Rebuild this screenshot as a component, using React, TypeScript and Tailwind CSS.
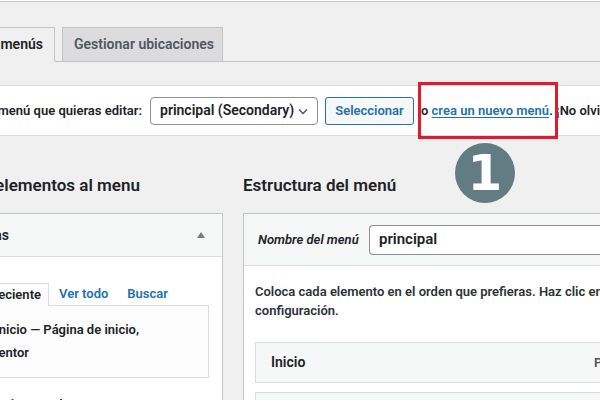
import type { ReactNode } from "react";

// Text that is cut off by the left edge of the screenshot: right-aligned in a fixed box
function Cut({ className, children }: { className: string; children: ReactNode }) {
  return (
    <span className={`flex shrink-0 justify-end overflow-hidden whitespace-nowrap ${className}`}>
      <span>{children}</span>
    </span>
  );
}

export default function App() {
  return (
    <div className="relative h-[400px] w-[600px] overflow-hidden bg-[#f0f0f1] font-['Roboto',sans-serif] text-[#1d2327]">
      {/* Top edge */}
      <div className="h-px bg-white" />
      <div className="h-px bg-[#c3c4c7]" />

      {/* Tabs */}
      <div className="mt-[25px] flex h-[35px] items-end border-b border-[#c3c4c7]">
        <div className="-mb-px flex h-[35px] w-[55px] shrink-0 items-center border-t border-r border-b border-[#c3c4c7] border-b-[#f0f0f1] bg-[#f0f0f1] text-[14px] font-semibold">
          <Cut className="w-[43px]">Editar menús</Cut>
        </div>
        <div className="-mb-px ml-[7px] flex h-[35px] w-[161px] shrink-0 items-center border border-[#c3c4c7] bg-[#dcdcde] px-[11px] text-[14px] font-semibold whitespace-nowrap text-[#50575e]">
          Gestionar ubicaciones
        </div>
      </div>

      {/* Menu select bar */}
      <div className="relative mt-[23px] flex h-[51px] items-center border-y border-[#dcdcde] bg-white text-[13px] font-semibold">
        <Cut className="w-[142px]">Selecciona el menú que quieras editar:</Cut>
        <div className="ml-[8px] flex h-[28px] w-[168px] shrink-0 items-center justify-between rounded-[4px] border border-[#8c8f94] bg-white pr-[8px] pl-[9px] text-[14px] font-semibold whitespace-nowrap">
          <span>principal (Secondary)</span>
          <svg width="12" height="12" viewBox="0 0 12 12" fill="none" stroke="#50575e" strokeWidth="1.4">
            <path d="M2 4.5l4 4 4-4" />
          </svg>
        </div>
        <div className="ml-[7px] flex h-[28px] w-[89px] shrink-0 items-center justify-center rounded-[3px] border border-[#2271b1] bg-[#f6f7f7] text-[13px] font-semibold whitespace-nowrap text-[#2271b1]">
          Seleccionar
        </div>
        <span className="ml-[7px] shrink-0 whitespace-nowrap">
          o{" "}
          <span className="text-[#2271b1] underline underline-offset-2">crea un nuevo menú</span>. ¡No olvides guardar los cambios!
        </span>
        {/* Red highlight */}
        <div className="absolute top-[-4px] left-[418px] h-[57px] w-[140px] border-[3px] border-[#e5192e]" />
      </div>

      {/* Step badge */}
      <div className="absolute top-[143px] left-[455px] flex h-[60px] w-[60px] items-center justify-center rounded-full bg-[#637b82] pb-[1px] font-['DejaVu_Sans',sans-serif] text-[50px] leading-none font-bold text-white">
        1
      </div>

      {/* Columns */}
      <div className="mt-[38px] flex gap-[20px]">
        {/* Left: add items */}
        <div className="w-[223px] shrink-0">
          <h2 className="flex h-[24px] items-center text-[17px] font-semibold">
            <Cut className="w-[140px]">Añadir elementos al menu</Cut>
          </h2>
          <div className="mt-[15px] border-t border-r border-[#c3c4c7] bg-white">
            <div className="flex h-[43px] items-center justify-between border-b border-[#dcdcde] bg-[#f6f7f7] pr-[17px] text-[14px] font-semibold">
              <Cut className="w-[9px]">Páginas</Cut>
              <svg width="8" height="6" viewBox="0 0 8 6">
                <path d="M0 6L4 0l4 6z" fill="#787c82" />
              </svg>
            </div>
            <div className="pt-[25px] pr-[13px]">
              <div className="flex items-end text-[13px] font-semibold">
                <div className="-mb-px flex h-[23px] w-[49px] items-center border-t border-r border-[#dcdcde] bg-[#fcfcfc]">
                  <Cut className="w-[41px]">Más reciente</Cut>
                </div>
                <span className="ml-[10px] flex h-[23px] items-center text-[#2271b1]">Ver todo</span>
                <span className="ml-[19px] flex h-[23px] items-center text-[#2271b1]">Buscar</span>
              </div>
              <div className="flex h-[73px] flex-col justify-center gap-[4px] border-y border-r border-[#dcdcde] bg-[#fcfcfc] pb-[2px] text-[13px] leading-[19px] font-semibold">
                <Cut className="w-[139px]">Inicio — Página de inicio,</Cut>
                <Cut className="w-[29px]">Elementor</Cut>
              </div>
              <div className="mt-[17px] flex text-[13px] font-semibold">
                <Cut className="w-[70px]">Seleccionar todo</Cut>
              </div>
            </div>
          </div>
        </div>

        {/* Right: menu structure */}
        <div className="w-[420px] shrink-0">
          <h2 className="flex h-[24px] items-center text-[17px] font-semibold whitespace-nowrap">Estructura del menú</h2>
          <div className="mt-[15px] border-t border-l border-[#c3c4c7] bg-white">
            <div className="flex h-[52px] items-center border-b border-[#dcdcde] bg-[#f6f7f7] pl-[14px]">
              <span className="w-[111px] shrink-0 text-[13px] font-semibold italic">Nombre del menú</span>
              <div className="flex h-[30px] flex-1 items-center rounded-l-[4px] border-y border-l border-[#8c8f94] bg-white pl-[9px] text-[15px] font-semibold">
                principal
              </div>
            </div>
            <div className="px-[11px] pt-[16px]">
              <p className="text-[13px] leading-[19px] font-semibold whitespace-nowrap text-[#2c3338]">
                Coloca cada elemento en el orden que prefieras. Haz clic en la flecha de la derecha del elemento para mostrar más opciones de
                <br />
                configuración.
              </p>
              <div className="mt-[22px] flex h-[41px] items-center border border-[#dcdcde] bg-[#f6f7f7] pl-[15px] text-[14px] font-semibold">
                <span className="w-[323px] shrink-0">Inicio</span>
                <span className="text-[13px] text-[#50575e]">Página</span>
              </div>
              <div className="mt-[9px] h-[41px] border border-[#dcdcde] bg-[#f6f7f7]" />
            </div>
          </div>
        </div>
      </div>
    </div>
  );
}
